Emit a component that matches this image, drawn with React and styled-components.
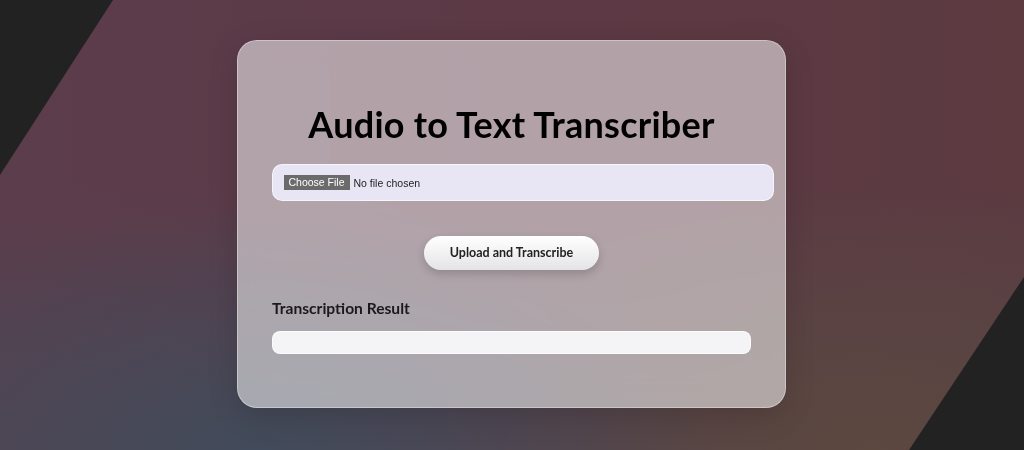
import React from "react";
import styled, { createGlobalStyle } from "styled-components";

const GlobalStyle = createGlobalStyle`
  html, body { margin: 0; padding: 0; }
  body {
    background: #222222;
    font-family: Lato, "Open Sans", sans-serif;
    color: #111;
  }
  * { box-sizing: border-box; }
`;

const Backdrop = styled.div`
  position: fixed;
  inset: 0;
  z-index: 0;
  clip-path: polygon(113px 0, 100% 0, 100% 277px, 909px 100%, 0 100%, 0 175px);
  background:
    radial-gradient(ellipse 45% 55% at 25% 100%, rgba(64, 76, 92, 0.92) 0%, rgba(64, 76, 92, 0) 100%),
    radial-gradient(ellipse 45% 60% at 85% 100%, rgba(92, 72, 62, 0.95) 0%, rgba(92, 72, 62, 0) 100%),
    linear-gradient(180deg, rgba(0, 0, 0, 0) 40%, rgba(80, 70, 82, 0.6) 100%),
    linear-gradient(90deg, #5c3d4c 0%, #5c3945 50%, #5c3a40 100%);
`;

const Page = styled.main`
  position: relative;
  z-index: 1;
  min-height: 100vh;
  padding-bottom: 3px;
  display: flex;
  align-items: center;
  justify-content: center;
`;

const Card = styled.section`
  width: 549px;
  margin-left: -1px;
  padding: 34px 34px 53px;
  border-radius: 20px;
  background: rgba(255, 255, 255, 0.53);
  border: 1px solid rgba(255, 255, 255, 0.35);
  backdrop-filter: blur(12px);
  box-shadow: 0 8px 30px rgba(0, 0, 0, 0.15);
`;

const Title = styled.h1`
  margin: 25px 0 16px;
  font-family: Lato, sans-serif;
  font-size: 36px;
  line-height: 48px;
  letter-spacing: 0.25px;
  font-weight: 700;
  text-align: center;
  color: #000;
`;

const FileInput = styled.input`
  display: block;
  box-sizing: content-box;
  width: 100%;
  height: 15px;
  padding: 10px 10.5px;
  border: 1px solid rgba(255, 255, 255, 0.6);
  border-radius: 10px;
  background: #e8e6f5;
  font: 10.5px "Liberation Sans", Arial, sans-serif;
  color: #222;

  &::file-selector-button {
    height: 15px;
    background: #6b6b6b;
    color: #fff;
    border: none;
    border-radius: 0;
    padding: 0 5px;
    margin-right: 4px;
    font: 10.5px "Liberation Sans", Arial, sans-serif;
  }
`;

const ButtonRow = styled.div`
  display: flex;
  justify-content: center;
  margin-top: 35px;
`;

const UploadButton = styled.button`
  width: 175px;
  height: 34px;
  border: none;
  border-radius: 17px;
  background: linear-gradient(180deg, #ffffff 0%, #e4e4e6 100%);
  box-shadow: 0 4px 10px rgba(0, 0, 0, 0.18);
  font-family: Lato, sans-serif;
  font-size: 12.5px;
  font-weight: 700;
  color: #222;
  cursor: pointer;
`;

const ResultLabel = styled.h3`
  margin: 28px 0 12px;
  font-size: 15.6px;
  line-height: 21px;
  font-weight: 700;
  color: #1a1a1a;
`;

const ResultBox = styled.div`
  height: 23px;
  border-radius: 8px;
  background: #f4f3f6;
  border: 1px solid rgba(255, 255, 255, 0.7);
`;

export default function App() {
  return (
    <>
      <GlobalStyle />
      <Backdrop />
      <Page>
        <Card>
          <Title>Audio to Text Transcriber</Title>
          <FileInput type="file" accept="audio/*" />
          <ButtonRow>
            <UploadButton type="button">Upload and Transcribe</UploadButton>
          </ButtonRow>
          <ResultLabel>Transcription Result</ResultLabel>
          <ResultBox />
        </Card>
      </Page>
    </>
  );
}
